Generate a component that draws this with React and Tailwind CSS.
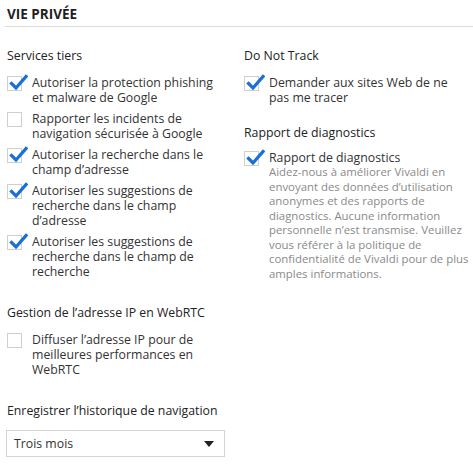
import React from 'react';

const Check = () => (
    <svg
        className="absolute -top-[4px] left-[1px] w-[19px] h-[19px]"
        viewBox="0 0 19 19"
        fill="none"
    >
        <path d="M2.5 10.5 L7 15 L17 3.5" stroke="#1a6fd6" strokeWidth="3.2" strokeLinecap="square" />
    </svg>
);

const Checkbox = ({ checked }) => (
    <span className="relative mt-[1px] w-[15px] h-[15px] shrink-0 border border-[#cfcfcf] bg-white">
        {checked && <Check />}
    </span>
);

const Option = ({ checked, lines, children }) => (
    <div className="flex gap-[10px]">
        <Checkbox checked={checked} />
        <div>
            {lines.map((l, i) => (
                <div key={i} className="whitespace-nowrap">{l}</div>
            ))}
            {children}
        </div>
    </div>
);

const Heading = ({ children, className = '' }) => (
    <div className={`whitespace-nowrap text-[#222] ${className}`}>{children}</div>
);

export default function App() {
    return (
        <div
            className="w-[473px] h-[470px] bg-white text-[12.3px] leading-[15px] text-[#333] overflow-hidden"
            style={{ fontFamily: '"Open Sans", "Noto Sans", sans-serif' }}
        >
            <div className="pl-[2px] pt-[6px] pb-[4px] ml-[5px] border-b border-[#dcdcdc]">
                <span className="font-bold text-[#1e1e1e] text-[13.5px] leading-[16px]">VIE PRIVÉE</span>
            </div>

            <div className="flex pl-[7px] pt-[21px]">
                {/* left column */}
                <div className="w-[237px] shrink-0 flex flex-col">
                    <Heading>Services tiers</Heading>
                    <div className="mt-[12px] flex flex-col gap-[6px]">
                        <Option checked lines={['Autoriser la protection phishing', 'et malware de Google']} />
                        <Option lines={['Rapporter les incidents de', 'navigation sécurisée à Google']} />
                        <Option checked lines={['Autoriser la recherche dans le', 'champ d’adresse']} />
                        <Option checked lines={['Autoriser les suggestions de', 'recherche dans le champ', 'd’adresse']} />
                        <Option checked lines={['Autoriser les suggestions de', 'recherche dans le champ de', 'recherche']} />
                    </div>

                    <Heading className="mt-[26px]">Gestion de l’adresse IP en WebRTC</Heading>
                    <div className="mt-[12px]">
                        <Option lines={['Diffuser l’adresse IP pour de', 'meilleures performances en', 'WebRTC']} />
                    </div>

                    <Heading className="mt-[26px]">Enregistrer l’historique de navigation</Heading>
                    <div className="mt-[12px] w-[219px] h-[27px] -ml-[1px] border border-[#d4d4d4] bg-white flex items-center justify-between pl-[7px] pr-[10px]">
                        <span>Trois mois</span>
                        <svg width="10" height="6" viewBox="0 0 10 6">
                            <path d="M0 0 H10 L5 6 Z" fill="#222" />
                        </svg>
                    </div>
                </div>

                {/* right column */}
                <div className="flex flex-col">
                    <Heading>Do Not Track</Heading>
                    <div className="mt-[12px]">
                        <Option checked lines={['Demander aux sites Web de ne', 'pas me tracer']} />
                    </div>

                    <Heading className="mt-[20px]">Rapport de diagnostics</Heading>
                    <div className="mt-[10px]">
                        <Option checked lines={['Rapport de diagnostics']}>
                            <div className="text-[#8a8a8a] text-[11.4px] leading-[14.5px]">
                                {[
                                    'Aidez-nous à améliorer Vivaldi en',
                                    'envoyant des données d’utilisation',
                                    'anonymes et des rapports de',
                                    'diagnostics. Aucune information',
                                    'personnelle n’est transmise. Veuillez',
                                    'vous référer à la politique de',
                                    'confidentialité de Vivaldi pour de plus',
                                    'amples informations.',
                                ].map((l, i) => (
                                    <div key={i} className="whitespace-nowrap">{l}</div>
                                ))}
                            </div>
                        </Option>
                    </div>
                </div>
            </div>
        </div>
    );
}
